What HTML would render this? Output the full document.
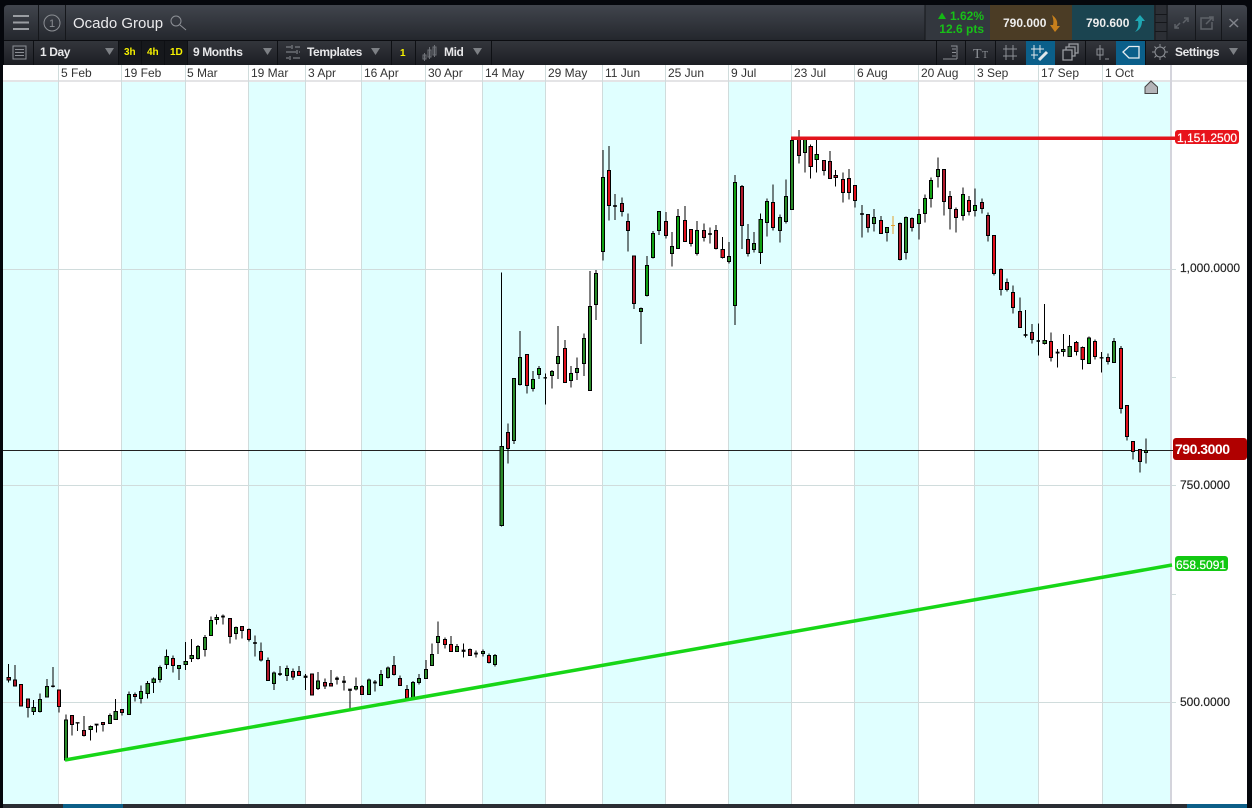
<!DOCTYPE html>
<html><head><meta charset="utf-8"><title>Ocado Group</title>
<style>
html,body{margin:0;padding:0;background:#05070c;width:1252px;height:808px;overflow:hidden}
svg{display:block;font-family:"Liberation Sans",sans-serif}
.c{shape-rendering:crispEdges}
.c path{stroke:#000;stroke-width:3;fill:none}
.c rect{stroke:#000;stroke-width:3;width:10px;transform:translateX(1px)}
.c .g{fill:#2a8a2a}.c .G{fill:#0fa012}.c .r{fill:#ae1a2c}.c .R{fill:#e0101c}.c .f{fill:#000;stroke-width:1}
.ax{font-size:12px;fill:#333}
.px{font-size:12px;fill:#222;stroke:#222;stroke-width:.15}
.tb{font-size:12px;font-weight:bold;fill:#e8e8ea;letter-spacing:-.4px}
.y{font-size:10px;font-weight:bold;fill:#f5f000}
.ic{fill:none;stroke:#8d9096;stroke-width:1}
.dv{stroke:#0e1014;stroke-width:1}
.ar{fill:#7d8085}
</style></head><body>
<svg width="1252" height="808" viewBox="0 0 1252 808" xmlns="http://www.w3.org/2000/svg">
<defs>
<linearGradient id="h" x1="0" y1="0" x2="0" y2="1"><stop offset="0" stop-color="#41454d"/><stop offset="1" stop-color="#24272d"/></linearGradient>
<linearGradient id="t" x1="0" y1="0" x2="0" y2="1"><stop offset="0" stop-color="#33363c"/><stop offset="1" stop-color="#1c1e23"/></linearGradient>
</defs>
<rect width="1252" height="808" fill="#05070c"/>
<!-- chart area -->
<rect x="3" y="65" width="1244" height="739" fill="#fff"/>
<g fill="#e0ffff">
<rect x="3" y="81" width="55" height="723"/><rect x="121" y="81" width="64" height="723"/><rect x="248" y="81" width="57" height="723"/><rect x="361" y="81" width="64" height="723"/><rect x="482" y="81" width="63" height="723"/><rect x="602" y="81" width="63" height="723"/><rect x="728" y="81" width="63" height="723"/><rect x="854" y="81" width="64" height="723"/><rect x="974" y="81" width="64" height="723"/><rect x="1102" y="81" width="68" height="723"/>
</g>
<rect x="3" y="80" width="1244" height="2" fill="#e4e4e6"/>
<g stroke="#d0dcdc" stroke-width="1" shape-rendering="crispEdges">
<path d="M58.5 65V804M121.5 65V804M185.5 65V804M248.5 65V804M305.5 65V804M361.5 65V804M425.5 65V804M482.5 65V804M545.5 65V804M602.5 65V804M665.5 65V804M728.5 65V804M791.5 65V804M854.5 65V804M918.5 65V804M974.5 65V804M1038.5 65V804M1102.5 65V804"/>
<path d="M3 269.5H1176M3 485.5H1176M3 702.5H1176M1170 377.5H1176M1170 594.5H1176"/>
</g>
<rect x="1170" y="65" width="2" height="739" fill="#d4d4dc"/>
<!-- date axis -->
<g class="ax">
<text x="61" y="77">5 Feb</text><text x="124" y="77">19 Feb</text><text x="187" y="77">5 Mar</text><text x="251" y="77">19 Mar</text><text x="308" y="77">3 Apr</text><text x="364" y="77">16 Apr</text><text x="428" y="77">30 Apr</text><text x="485" y="77">14 May</text><text x="548" y="77">29 May</text><text x="605" y="77">11 Jun</text><text x="668" y="77">25 Jun</text><text x="731" y="77">9 Jul</text><text x="794" y="77">23 Jul</text><text x="857" y="77">6 Aug</text><text x="921" y="77">20 Aug</text><text x="977" y="77">3 Sep</text><text x="1041" y="77">17 Sep</text><text x="1105" y="77">1 Oct</text>
</g>
<!-- current line -->
<path d="M3 450.5H1174" stroke="#222" stroke-width="1" shape-rendering="crispEdges"/>
<!-- candles -->
<g class="c">
<g transform="translate(0 600) scale(.33333)">
<path d="M26 192V248M45 195V258M63 253V320M84 297V353M101 300V345M120 280V338M141 237V292M159 201V262M177 270V338M198 343V482M216 345V407M233 367V393M252 348V410M272 377V422M290 372V398M309 366V395M330 340V372M347 297V360M366 328V347M387 274V344M405 278V305M423 256V311M443 243V296M461 232V279M480 196V248M500 148V207M519 166V218M537 195V240M557 126V210M575 117V186M594 135V178M615 105V170M633 50V107M650 43V74M669 44V74M690 55V130M708 80V119M726 78V116M747 85V124M765 106V170"/>
<rect class="r" x="20" y="232" width="12" height="8"/><rect class="r" x="39" y="240" width="12" height="18"/><rect class="R" x="57" y="253" width="12" height="65"/><rect class="r" x="78" y="297" width="12" height="26"/><rect class="g" x="95" y="322" width="12" height="13"/><rect class="g" x="114" y="298" width="12" height="37"/><rect class="g" x="135" y="259" width="12" height="32"/><rect class="f" x="153" y="257" width="12" height="4"/><rect class="R" x="171" y="270" width="12" height="50"/><rect class="g" x="192" y="360" width="12" height="120"/><rect class="r" x="210" y="346" width="12" height="27"/><rect class="f" x="227" y="367" width="12" height="3"/><rect class="r" x="246" y="391" width="12" height="16"/><rect class="g" x="266" y="379" width="12" height="10"/><rect class="f" x="284" y="372" width="12" height="4"/><rect class="r" x="303" y="367" width="12" height="7"/><rect class="g" x="324" y="346" width="12" height="25"/><rect class="g" x="341" y="334" width="12" height="25"/><rect class="r" x="360" y="328" width="12" height="10"/><rect class="G" x="381" y="283" width="12" height="61"/><rect class="r" x="399" y="283" width="12" height="7"/><rect class="G" x="417" y="274" width="12" height="22"/><rect class="g" x="437" y="250" width="12" height="31"/><rect class="g" x="455" y="237" width="12" height="11"/><rect class="g" x="474" y="202" width="12" height="36"/><rect class="G" x="494" y="169" width="12" height="24"/><rect class="R" x="513" y="175" width="12" height="22"/><rect class="g" x="531" y="196" width="12" height="9"/><rect class="g" x="551" y="184" width="12" height="10"/><rect class="g" x="569" y="166" width="12" height="10"/><rect class="g" x="588" y="139" width="12" height="37"/><rect class="g" x="609" y="112" width="12" height="36"/><rect class="G" x="627" y="61" width="12" height="46"/><rect class="g" x="644" y="52" width="12" height="7"/><rect class="f" x="663" y="48" width="12" height="4"/><rect class="r" x="684" y="55" width="12" height="55"/><rect class="g" x="702" y="82" width="12" height="18"/><rect class="r" x="720" y="80" width="12" height="12"/><rect class="R" x="741" y="88" width="12" height="31"/><rect class="f" x="759" y="127" width="12" height="4"/>
</g>
<g transform="translate(260 600) scale(.33333)">
<path d="M3 127V185M24 172V243M42 215V270M60 198V228M81 197V243M99 205V240M117 198V228M137 222V270M156 220V287M174 216V270M195 235V267M213 210V260M231 230V254M252 228V272M270 267V328M288 232V272M306 255V285M327 235V285M345 240V275M363 210V258M384 200V235M402 168V226M420 226V258M441 255V297M459 243V295M477 222V253M498 180V237M516 130V198M534 64V162M555 112V145M573 108V155M591 132V156M611 130V173M630 146V168M648 152V172M669 148V170M687 160V190M705 162V200"/>
<rect class="R" x="-3" y="154" width="12" height="26"/><rect class="r" x="18" y="181" width="12" height="61"/><rect class="g" x="36" y="219" width="12" height="31"/><rect class="f" x="54" y="220" width="12" height="5"/><rect class="g" x="75" y="205" width="12" height="22"/><rect class="r" x="93" y="214" width="12" height="17"/><rect class="R" x="111" y="214" width="12" height="13"/><rect class="f" x="131" y="228" width="12" height="5"/><rect class="r" x="150" y="222" width="12" height="63"/><rect class="g" x="168" y="243" width="12" height="22"/><rect class="r" x="189" y="247" width="12" height="11"/><rect class="r" x="207" y="250" width="12" height="8"/><rect class="f" x="225" y="234" width="12" height="5"/><rect class="f" x="246" y="243" width="12" height="5"/><rect class="f" x="264" y="267" width="12" height="5"/><rect class="g" x="282" y="259" width="12" height="8"/><rect class="r" x="300" y="259" width="12" height="25"/><rect class="G" x="321" y="240" width="12" height="44"/><rect class="f" x="339" y="245" width="12" height="5"/><rect class="G" x="357" y="223" width="12" height="34"/><rect class="g" x="378" y="204" width="12" height="29"/><rect class="r" x="396" y="196" width="12" height="28"/><rect class="r" x="414" y="235" width="12" height="22"/><rect class="R" x="435" y="268" width="12" height="26"/><rect class="G" x="453" y="247" width="12" height="47"/><rect class="g" x="471" y="235" width="12" height="13"/><rect class="g" x="492" y="208" width="12" height="28"/><rect class="g" x="510" y="163" width="12" height="34"/><rect class="g" x="528" y="109" width="12" height="19"/><rect class="R" x="549" y="118" width="12" height="16"/><rect class="R" x="567" y="133" width="12" height="22"/><rect class="g" x="585" y="139" width="12" height="16"/><rect class="f" x="605" y="150" width="12" height="5"/><rect class="r" x="624" y="148" width="12" height="18"/><rect class="f" x="642" y="159" width="12" height="4"/><rect class="g" x="663" y="154" width="12" height="7"/><rect class="R" x="681" y="166" width="12" height="22"/><rect class="g" x="699" y="166" width="12" height="27"/>
</g>
<g transform="translate(480 260) scale(.33333)">
<path d="M65 37V800M84 490V610M102 354V552M120 213V376M141 283V401M159 333V395M177 318V357M196 340V434M216 330V386M234 198V357M255 240V368M273 318V383M291 292V360M312 220V348M330 33V392M348 30V180"/>
<rect class="g" x="59" y="560" width="12" height="237"/><rect class="r" x="78" y="518" width="12" height="47"/><rect class="g" x="96" y="355" width="12" height="186"/><rect class="g" x="114" y="292" width="12" height="82"/><rect class="R" x="135" y="283" width="12" height="93"/><rect class="G" x="153" y="358" width="12" height="27"/><rect class="G" x="171" y="325" width="12" height="19"/><rect class="f" x="190" y="352" width="12" height="3"/><rect class="g" x="210" y="334" width="12" height="13"/><rect class="g" x="228" y="289" width="12" height="22"/><rect class="R" x="249" y="265" width="12" height="102"/><rect class="G" x="267" y="340" width="12" height="22"/><rect class="g" x="285" y="325" width="12" height="13"/><rect class="g" x="306" y="235" width="12" height="76"/><rect class="g" x="324" y="139" width="12" height="252"/><rect class="g" x="342" y="40" width="12" height="93"/>
</g>
<g transform="translate(480 130) scale(.33333)">
<path d="M369 60V392M387 48V272M405 192V270M426 202V260M444 250V365M462 377V537M483 532V642M501 378V500M519 303V385M537 243V315M558 246V326M576 306V410M594 237V356M615 228V335M633 297V350M651 273V377M672 280V335M690 292V341M708 285V359"/>
<rect class="G" x="363" y="142" width="12" height="223"/><rect class="R" x="381" y="121" width="12" height="105"/><rect class="f" x="399" y="226" width="12" height="4"/><rect class="r" x="420" y="220" width="12" height="25"/><rect class="r" x="438" y="274" width="12" height="28"/><rect class="r" x="456" y="378" width="12" height="143"/><rect class="g" x="477" y="535" width="12" height="9"/><rect class="G" x="495" y="406" width="12" height="91"/><rect class="G" x="513" y="310" width="12" height="73"/><rect class="G" x="531" y="244" width="12" height="57"/><rect class="r" x="552" y="274" width="12" height="43"/><rect class="g" x="570" y="349" width="12" height="22"/><rect class="G" x="588" y="259" width="12" height="96"/><rect class="R" x="609" y="271" width="12" height="63"/><rect class="R" x="627" y="298" width="12" height="43"/><rect class="G" x="645" y="301" width="12" height="70"/><rect class="r" x="666" y="301" width="12" height="21"/><rect class="f" x="684" y="310" width="12" height="4"/><rect class="r" x="702" y="301" width="12" height="55"/>
</g>
<g transform="translate(720 125) scale(.33333)">
<path d="M8 336V400M27 351V416M45 150V600M66 180V372M84 297V395M102 321V383M122 265V417M141 220V335M159 178V317M180 268V353M198 163V296M216 38V254M237 15V116M255 40V143M272 58V161M290 44V143M312 105V152M330 78V161M347 135V185M369 142V233M387 132V224M405 181V248M426 240V338M444 267V323M462 252V320M483 273V327M501 306V350M540 293V406M558 275V404M576 278V320M597 252V344M615 208V293M633 157V247M654 97V188M672 133V272M690 198V314M708 247V323M729 187V286M747 213V272M765 190V275M786 220V265M804 262V350"/>
<path d="M519 273V327M513 301H525" style="stroke:#e0a030"/>
<rect class="R" x="2" y="373" width="12" height="25"/><rect class="g" x="21" y="394" width="12" height="16"/><rect class="G" x="39" y="172" width="12" height="370"/><rect class="r" x="60" y="184" width="12" height="118"/><rect class="r" x="78" y="343" width="12" height="43"/><rect class="g" x="96" y="355" width="12" height="19"/><rect class="G" x="116" y="283" width="12" height="100"/><rect class="G" x="135" y="229" width="12" height="63"/><rect class="R" x="153" y="232" width="12" height="75"/><rect class="g" x="174" y="277" width="12" height="40"/><rect class="g" x="192" y="214" width="12" height="76"/><rect class="g" x="210" y="46" width="12" height="207"/><rect class="r" x="231" y="40" width="12" height="52"/><rect class="g" x="249" y="40" width="12" height="43"/><rect class="R" x="266" y="64" width="12" height="60"/><rect class="G" x="284" y="88" width="12" height="16"/><rect class="r" x="306" y="106" width="12" height="31"/><rect class="r" x="324" y="109" width="12" height="52"/><rect class="r" x="341" y="151" width="12" height="7"/><rect class="R" x="363" y="163" width="12" height="40"/><rect class="R" x="381" y="160" width="12" height="43"/><rect class="R" x="399" y="181" width="12" height="46"/><rect class="f" x="420" y="265" width="12" height="4"/><rect class="r" x="438" y="268" width="12" height="39"/><rect class="g" x="456" y="277" width="12" height="19"/><rect class="R" x="477" y="286" width="12" height="39"/><rect class="g" x="495" y="307" width="12" height="16"/><rect class="r" x="534" y="295" width="12" height="109"/><rect class="g" x="552" y="277" width="12" height="105"/><rect class="r" x="570" y="280" width="12" height="28"/><rect class="G" x="591" y="268" width="12" height="28"/><rect class="G" x="609" y="220" width="12" height="45"/><rect class="G" x="627" y="166" width="12" height="54"/><rect class="g" x="648" y="133" width="12" height="22"/><rect class="r" x="666" y="133" width="12" height="97"/><rect class="r" x="684" y="214" width="12" height="36"/><rect class="r" x="702" y="253" width="12" height="24"/><rect class="G" x="723" y="208" width="12" height="63"/><rect class="R" x="741" y="226" width="12" height="33"/><rect class="G" x="759" y="241" width="12" height="15"/><rect class="r" x="780" y="232" width="12" height="18"/><rect class="r" x="798" y="271" width="12" height="60"/>
</g>
<g transform="translate(980 200) scale(.33333)">
<path d="M42 105V226M63 205V286M81 235V275M99 256V341M120 292V383M137 330V412M156 372V431M175 370V467M194 312V433M213 397V484M233 447V503M250 402V470M269 405V470M289 423V467M308 440V509M327 410V491M345 418V478M365 456V518M384 460V494M402 414V488M423 438V640M441 615V722M459 724V779M480 748V818M498 715V791"/>
<rect class="R" x="36" y="106" width="12" height="114"/><rect class="R" x="57" y="208" width="12" height="60"/><rect class="r" x="75" y="247" width="12" height="21"/><rect class="R" x="93" y="277" width="12" height="45"/><rect class="r" x="114" y="334" width="12" height="48"/><rect class="f" x="131" y="403" width="12" height="4"/><rect class="r" x="150" y="397" width="12" height="21"/><rect class="f" x="169" y="421" width="12" height="4"/><rect class="g" x="188" y="421" width="12" height="10"/><rect class="R" x="207" y="424" width="12" height="48"/><rect class="f" x="227" y="456" width="12" height="4"/><rect class="g" x="244" y="448" width="12" height="7"/><rect class="g" x="263" y="439" width="12" height="30"/><rect class="R" x="283" y="427" width="12" height="27"/><rect class="R" x="302" y="442" width="12" height="37"/><rect class="G" x="321" y="414" width="12" height="76"/><rect class="R" x="339" y="424" width="12" height="45"/><rect class="f" x="359" y="472" width="12" height="3"/><rect class="r" x="378" y="472" width="12" height="13"/><rect class="g" x="396" y="424" width="12" height="63"/><rect class="R" x="417" y="445" width="12" height="181"/><rect class="R" x="435" y="617" width="12" height="92"/><rect class="R" x="453" y="725" width="12" height="29"/><rect class="r" x="474" y="749" width="12" height="36"/><rect class="g" x="492" y="752" width="12" height="5"/>
</g>
</g>
<!-- trend lines -->
<path d="M65 760L1172 565" stroke="#17d617" stroke-width="3.500" fill="none"/>
<rect x="791" y="136.500" width="384" height="3.500" fill="#e2141c"/>
<path d="M1145 93.500V87L1151 81L1157.500 87V93.500Z" fill="#b4b4b8" stroke="#444" stroke-width="1"/>
<!-- price labels -->
<g class="px"><text x="1180" y="272">1,000.0000</text><text x="1180" y="489">750.0000</text><text x="1180" y="706">500.0000</text></g>
<rect x="1175" y="130" width="64" height="14" rx="3" fill="#e8141c"/>
<text x="1177" y="142" font-size="12" fill="#fff" stroke="#fff" stroke-width=".2">1,151.2500</text>
<rect x="1173" y="438" width="74" height="22" rx="3" fill="#b00000"/>
<text x="1175" y="454" font-size="14" font-weight="bold" fill="#fff" textLength="55">790.3000</text>
<rect x="1175" y="556" width="53" height="15" rx="3" fill="#12c812"/>
<text x="1176" y="569" font-size="12" fill="#fff" stroke="#fff" stroke-width=".2">658.5091</text>
<!-- bottom bar -->
<rect x="3" y="804" width="1244" height="4" fill="#2a2d33"/>
<rect x="63" y="804" width="60" height="4" fill="#0c5f88"/><rect x="1187" y="804" width="60" height="4" fill="#0c5f88"/>
<!-- header -->
<path d="M4 40V9Q4 5 8 5H1243Q1247 5 1247 9V40Z" fill="url(#h)"/>
<rect x="925" y="5" width="65" height="35" fill="#33373e"/>
<rect x="990" y="5" width="82" height="35" fill="#4b3c25"/>
<rect x="1072" y="5" width="82" height="35" fill="#1b4450"/>
<rect x="1154" y="5" width="14" height="35" fill="#2c2f35"/>
<g stroke="#15171b" stroke-width="1" shape-rendering="crispEdges"><path d="M1155 14.500H1167M1155 22.500H1167M1155 31.500H1167M1155 5V40M1167 5V40"/><path d="M38.500 5V40M65.500 5V40M925 5V40M1195.500 5V40M1221.500 5V40"/></g>
<path d="M13 16H29M13 22.500H29M13 29H29" stroke="#9a9da2" stroke-width="2"/>
<circle cx="52" cy="23" r="8" fill="none" stroke="#8b8e93" stroke-width="1"/>
<text x="52" y="27" font-size="11" fill="#8b8e93" text-anchor="middle">1</text>
<text x="73" y="28" font-size="15" fill="#eaeaec">Ocado Group</text>
<circle cx="176" cy="21" r="5" class="ic"/><path d="M180 25L186 30" class="ic"/>
<path d="M938 19L942 12.500L946 19Z" fill="#14b814"/>
<text x="984" y="20" font-size="12" font-weight="bold" fill="#18c018" text-anchor="end">1.62%</text>
<text x="984" y="33" font-size="12" font-weight="bold" fill="#18c018" text-anchor="end">12.6 pts</text>
<text x="1003" y="27" font-size="12" font-weight="bold" fill="#eee">790.000</text>
<path d="M1052 15C1056 18 1058 21 1057 26L1060 26L1055 32L1050 25L1053 25C1054 21 1053 18 1052 15Z" fill="#c8801c"/>
<text x="1086" y="27" font-size="12" font-weight="bold" fill="#eee">790.600</text>
<path d="M1135 32C1138 29 1139 25 1138 21L1135 21L1140 15L1145 21L1142 21C1142 26 1140 30 1135 32Z" fill="#1fa8b4"/>
<g fill="none" stroke="#5e6268" stroke-width="1.500"><path d="M1184 18L1188 18L1188 22M1188 18L1183 23M1175 24L1175 28L1179 28M1175 28L1180 23"/>
<path d="M1211 18H1201V29H1212V22M1206 24L1213 17M1209 17H1213V21"/></g>
<path d="M1229.500 19L1238 27M1238 19L1229.500 27" stroke="#80838a" stroke-width="1.500" fill="none"/>
<!-- toolbar -->
<rect x="4" y="41" width="1243" height="24" fill="url(#t)"/>
<rect x="4" y="40" width="1243" height="1" fill="#0b0c10"/>
<rect x="1026" y="41" width="29" height="24" fill="#0b5f8a"/>
<rect x="1116" y="41" width="29" height="24" fill="#0b5f8a"/>
<rect x="118" y="41" width="70" height="24" fill="#16181c"/>
<path d="M33.500 41V65M118.500 41V65M141.500 41V65M164.500 41V65M187.500 41V65M277.500 41V65M391.500 41V65M415.500 41V65M491.500 41V65M936.500 41V65M965.500 41V65M995.500 41V65M1085.500 41V65M1145.500 41V65" class="dv" shape-rendering="crispEdges"/>
<rect x="13" y="46" width="13" height="13" class="ic"/><path d="M15 49.500H24M15 52.500H24M15 55.500H24" class="ic"/>
<text x="40" y="56" class="tb">1 Day</text>
<path d="M105 48H114L109.500 55Z" class="ar"/>
<text x="124" y="55" class="y">3h</text><text x="147" y="55" class="y">4h</text><text x="170" y="55" class="y">1D</text>
<text x="193" y="56" class="tb">9 Months</text>
<path d="M263 48H272L267.500 55Z" class="ar"/>
<path d="M286 47H291M295 47H300M286 52H296M299 52H300M286 58H289M293 58H300M292 45V49M297 50V54M290 56V60" class="ic"/>
<text x="307" y="56" class="tb">Templates</text>
<path d="M371 48H380L375.500 55Z" class="ar"/>
<text x="400" y="56" class="y">1</text>
<path d="M423 55H426V59H423ZM428 50H431V57H428ZM433 47H436V55H433ZM424.500 53V61M429.500 47V59M434.500 45V57" fill="none" stroke="#6f7278" stroke-width="1"/>
<text x="444" y="56" class="tb">Mid</text>
<path d="M473 48H482L477.500 55Z" class="ar"/>
<path d="M943 59H957M951 46H957V59M952 49H956M952 52.500H956M952 56H956" class="ic"/>
<text x="973" y="58" font-family="Liberation Serif" font-size="14" fill="#8d9096">T</text><text x="982" y="58" font-family="Liberation Serif" font-size="10" fill="#8d9096">T</text>
<path d="M1006 45V60M1013 45V60M1003 49H1017M1003 56H1017" class="ic"/>
<path d="M1034 45V59M1040 45V53M1031 49H1044M1031 55H1038" stroke="#dfe6ea" stroke-width="1" fill="none"/><path d="M1039 60L1047 52" stroke="#dfe6ea" stroke-width="3"/>
<path d="M1063 50H1072V60H1063ZM1066 50V47H1075V56H1072M1069 47V44H1078V53H1075" fill="none" stroke="#9a9da2" stroke-width="1.300"/>
<path d="M1100 45V60M1097 49H1103V55H1097ZM1105 59H1109" class="ic"/>
<path d="M1123 52L1129 46.500H1139V58H1129Z" fill="none" stroke="#e8eef2" stroke-width="1.300"/>
<circle cx="1160" cy="52" r="5" class="ic"/><path d="M1160 44V47M1160 57V60M1152 52H1155M1165 52H1168M1154.500 46.500L1156.500 48.500M1163.500 55.500L1165.500 57.500M1154.500 57.500L1156.500 55.500M1163.500 48.500L1165.500 46.500" class="ic"/>
<text x="1175" y="56" class="tb">Settings</text>
<path d="M1229 48H1238L1233.500 55Z" class="ar"/>
</svg>
</body></html>
